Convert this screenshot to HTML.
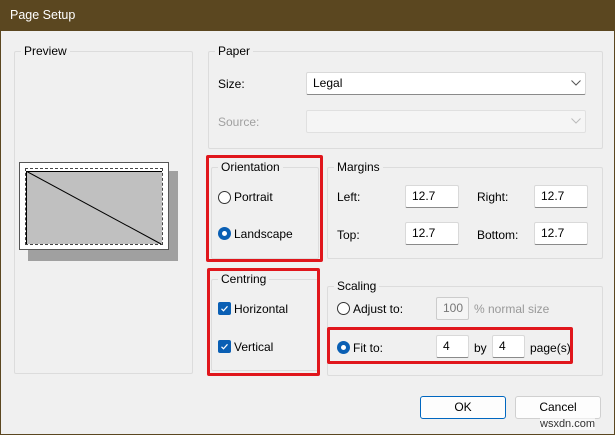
<html><head><style>
body{margin:0;width:615px;height:435px;background:#f0f0f0;font-family:"Liberation Sans",sans-serif;font-size:12px;color:#000;position:relative;overflow:hidden}
.a{position:absolute}
.title{left:0;top:0;width:615px;height:31px;background:#5b4720;color:#fff;font-size:12.5px;line-height:31px;padding-left:10px;box-sizing:border-box}
.win{left:0;top:31px;width:615px;height:404px;border:1px solid #5b4720;border-top:0;box-sizing:border-box}
.g{position:absolute;border:1px solid #dcdcdc;border-radius:2px}
.gl{position:absolute;background:#f0f0f0;padding:0 3px;top:-8px;left:6px;line-height:14px}
.in{position:absolute;background:#fff;border:1px solid #d9d9d9;border-bottom:1px solid #8a8a8a;box-sizing:border-box;padding-left:6px;line-height:20px;border-radius:2px}
.red{position:absolute;border:3px solid #e0161c;box-sizing:border-box;border-radius:2px}
.rb{position:absolute;width:11px;height:11px;border:1px solid #333;border-radius:50%;background:#fff}
.rbs{position:absolute;width:13px;height:13px;border-radius:50%;background:#0a5fb4}
.rbs:after{content:"";position:absolute;left:4px;top:4px;width:5px;height:5px;border-radius:50%;background:#fff}
.cb{position:absolute;width:13px;height:13px;border-radius:2px;background:#0a5fb4}
.btn{position:absolute;height:23px;border:1px solid #d0d0d0;background:#fdfdfd;border-radius:3px;box-sizing:border-box;text-align:center;line-height:21px}
</style></head><body>
<div class="a title">Page Setup</div>
<div class="a win"></div>
<div class="g" style="left:14px;top:51px;width:177px;height:321px"><span class="gl">Preview</span></div>
<div class="a" style="left:28px;top:171px;width:150px;height:90px;background:#a0a0a0"></div>
<div class="a" style="left:19px;top:162px;width:150px;height:88px;background:#fff;border:1px solid #555;box-sizing:border-box"></div>
<div class="a" style="left:25px;top:168px;width:138px;height:77px;border:1px dashed #444;box-sizing:border-box"></div>
<div class="a" style="left:26px;top:171px;width:136px;height:73px;background:#c0c0c0;border-top:1px solid #000;border-left:1px solid #000;box-sizing:border-box"></div>
<svg class="a" style="left:26px;top:171px" width="136" height="74"><line x1="0" y1="0" x2="135" y2="73" stroke="#000" stroke-width="1"/></svg>

<div class="g" style="left:208px;top:51px;width:393px;height:96px"><span class="gl">Paper</span></div>
<div class="a" style="left:218px;top:77px">Size:</div>
<div class="in" style="left:306px;top:72px;width:280px;height:23px">Legal</div>
<svg class="a" style="left:571px;top:80px" width="10" height="6"><path d="M0.5 0.5 L5 5 L9.5 0.5" stroke="#555" fill="none"/></svg>
<div class="a" style="left:218px;top:115px;color:#a0a0a0">Source:</div>
<div class="in" style="left:306px;top:110px;width:280px;height:23px;background:#f5f5f5;border-color:#e0e0e0"></div>
<svg class="a" style="left:571px;top:118px" width="10" height="6"><path d="M0.5 0.5 L5 5 L9.5 0.5" stroke="#bbb" fill="none"/></svg>

<div class="g" style="left:211px;top:167px;width:106px;height:90px"><span class="gl">Orientation</span></div>
<div class="rb" style="left:218px;top:191px"></div><div class="a" style="left:234px;top:190px">Portrait</div>
<div class="rbs" style="left:218px;top:227px"></div><div class="a" style="left:234px;top:227px">Landscape</div>
<div class="red" style="left:206px;top:155px;width:117px;height:107px"></div>

<div class="g" style="left:327px;top:167px;width:274px;height:90px"><span class="gl">Margins</span></div>
<div class="a" style="left:337px;top:190px">Left:</div>
<div class="in" style="left:405px;top:185px;width:54px;height:23px">12.7</div>
<div class="a" style="left:477px;top:190px">Right:</div>
<div class="in" style="left:534px;top:185px;width:54px;height:23px">12.7</div>
<div class="a" style="left:337px;top:228px">Top:</div>
<div class="in" style="left:405px;top:222px;width:54px;height:23px">12.7</div>
<div class="a" style="left:477px;top:228px">Bottom:</div>
<div class="in" style="left:534px;top:222px;width:54px;height:23px">12.7</div>

<div class="g" style="left:211px;top:279px;width:106px;height:90px"><span class="gl">Centring</span></div>
<div class="cb" style="left:218px;top:302px"><svg width="13" height="13"><path d="M3.5 6.8 L5.5 8.8 L9.5 4.3" stroke="#fff" fill="none" stroke-width="1.2"/></svg></div>
<div class="a" style="left:234px;top:302px">Horizontal</div>
<div class="cb" style="left:218px;top:340px"><svg width="13" height="13"><path d="M3.5 6.8 L5.5 8.8 L9.5 4.3" stroke="#fff" fill="none" stroke-width="1.2"/></svg></div>
<div class="a" style="left:234px;top:340px">Vertical</div>
<div class="red" style="left:207px;top:268px;width:113px;height:108px"></div>

<div class="g" style="left:327px;top:286px;width:274px;height:88px"><span class="gl">Scaling</span></div>
<div class="rb" style="left:337px;top:302px"></div><div class="a" style="left:353px;top:302px">Adjust to:</div>
<div class="in" style="left:436px;top:297px;width:33px;height:23px;background:#f5f5f5;border-color:#ccc;color:#777">100</div>
<div class="a" style="left:474px;top:302px;color:#999">% normal size</div>
<div class="rbs" style="left:337px;top:341px"></div><div class="a" style="left:353px;top:341px">Fit to:</div>
<div class="in" style="left:436px;top:335px;width:33px;height:23px">4</div>
<div class="a" style="left:474px;top:341px">by</div>
<div class="in" style="left:492px;top:335px;width:33px;height:23px">4</div>
<div class="a" style="left:530px;top:341px">page(s)</div>
<div class="red" style="left:327px;top:327px;width:246px;height:37px"></div>

<div class="btn" style="left:420px;top:396px;width:86px;border-color:#0067c0">OK</div>
<div class="btn" style="left:515px;top:396px;width:86px">Cancel</div>
<div class="a" style="left:540px;top:418px;color:#333;font-size:11px;background:rgba(255,255,255,.6)">wsxdn.com</div>
</body></html>
